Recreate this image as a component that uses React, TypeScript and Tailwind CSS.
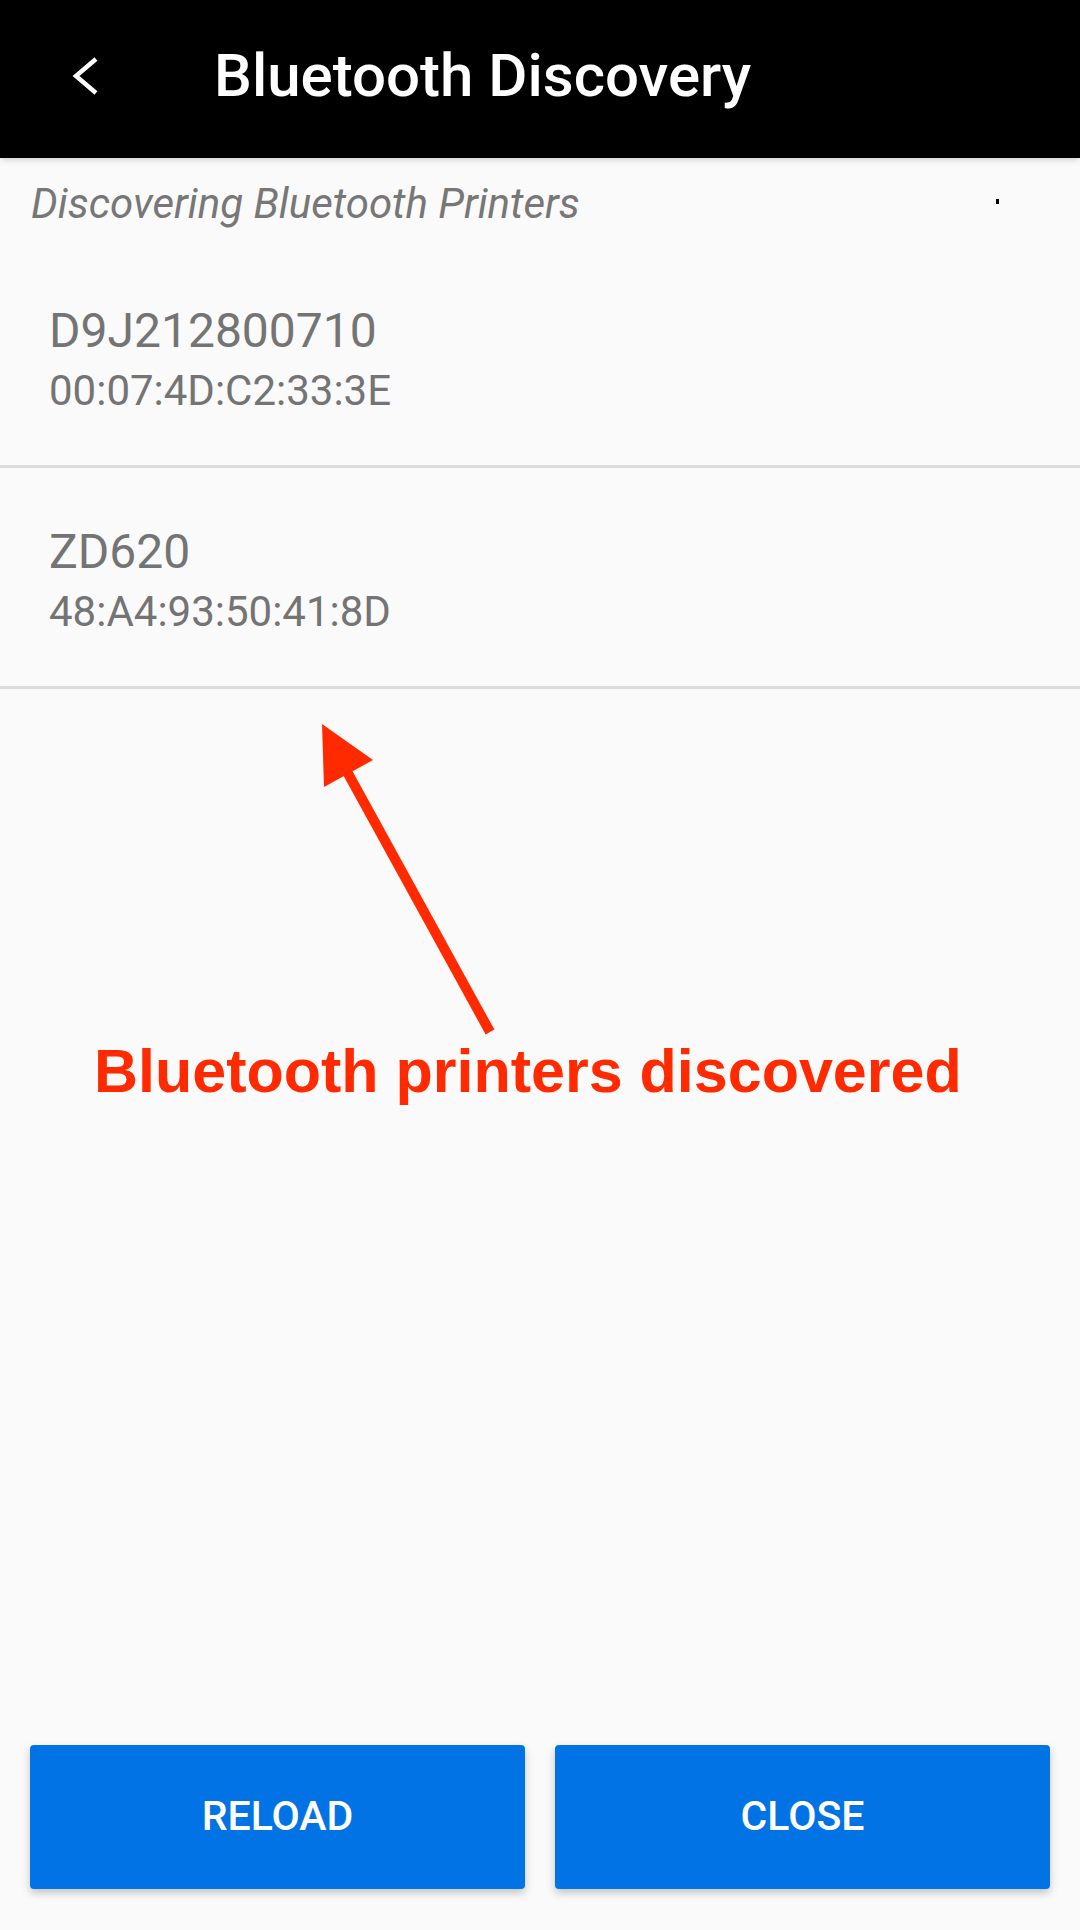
import React from 'react';

type Printer = { name: string; mac: string };

const printers: Printer[] = [
  { name: 'D9J212800710', mac: '00:07:4D:C2:33:3E' },
  { name: 'ZD620', mac: '48:A4:93:50:41:8D' },
];

const BackIcon: React.FC = () => (
  <svg width="28" height="42" viewBox="0 0 28 42" fill="none" className="ml-[72px]">
    <polyline points="24,4 4,21 24,38" stroke="white" strokeWidth="4.5" strokeLinejoin="miter" />
  </svg>
);

const PrinterRow: React.FC<{ printer: Printer }> = ({ printer }) => (
  <div className="h-[221px] border-b-[3px] border-[#dcdcdc] pl-[49px] pt-[60px] flex flex-col">
    <span className="text-[48px] leading-[48px] text-[#747474]">{printer.name}</span>
    <span className="mt-[15px] text-[42px] leading-[42px] text-[#747474]">{printer.mac}</span>
  </div>
);

export default function App() {
  return (
    <div className="relative w-[1080px] h-[1930px] bg-[#fafafa] flex flex-col font-['Roboto',sans-serif]">
      {/* Toolbar */}
      <div className="h-[158px] bg-black flex items-center pb-[6px] shadow-md z-10">
        <BackIcon />
        <h1 className="ml-[114px] text-[60px] leading-[60px] font-medium text-white">Bluetooth Discovery</h1>
      </div>

      {/* Status line */}
      <div className="h-[89px] flex items-start">
        <p className="pl-[31px] pt-[25px] text-[42px] leading-[42px] italic text-[#777777]">
          Discovering Bluetooth Printers
        </p>
        <div className="ml-auto mr-[81px] mt-[41px] w-[3px] h-[5px] bg-black" />
      </div>

      {/* Printer list */}
      {printers.map((p) => (
        <PrinterRow key={p.mac} printer={p} />
      ))}

      <div className="flex-1" />

      {/* Buttons */}
      <div className="flex gap-[30px] px-[30px] pb-[41px]">
        <button className="flex-1 h-[144px] rounded-[4px] bg-[#0273e5] text-white text-[41px] font-medium shadow-[0_4px_8px_rgba(0,0,0,0.22)]">
          RELOAD
        </button>
        <button className="flex-1 h-[144px] rounded-[4px] bg-[#0273e5] text-white text-[41px] font-medium shadow-[0_4px_8px_rgba(0,0,0,0.22)]">
          CLOSE
        </button>
      </div>

      {/* Annotation overlay */}
      <svg
        className="absolute left-[300px] top-[700px]"
        width="220"
        height="350"
        viewBox="300 700 220 350"
      >
        <line x1="345" y1="768" x2="490" y2="1032" stroke="#ff2a00" strokeWidth="10" />
        <polygon points="322,724 324,787 373,760" fill="#ff2a00" />
      </svg>
      <p className="absolute left-[94px] top-[1041px] text-[61px] leading-[61px] font-bold text-[#ff2a00] font-['Liberation_Sans',Arial,sans-serif] whitespace-nowrap">
        Bluetooth printers discovered
      </p>
    </div>
  );
}
